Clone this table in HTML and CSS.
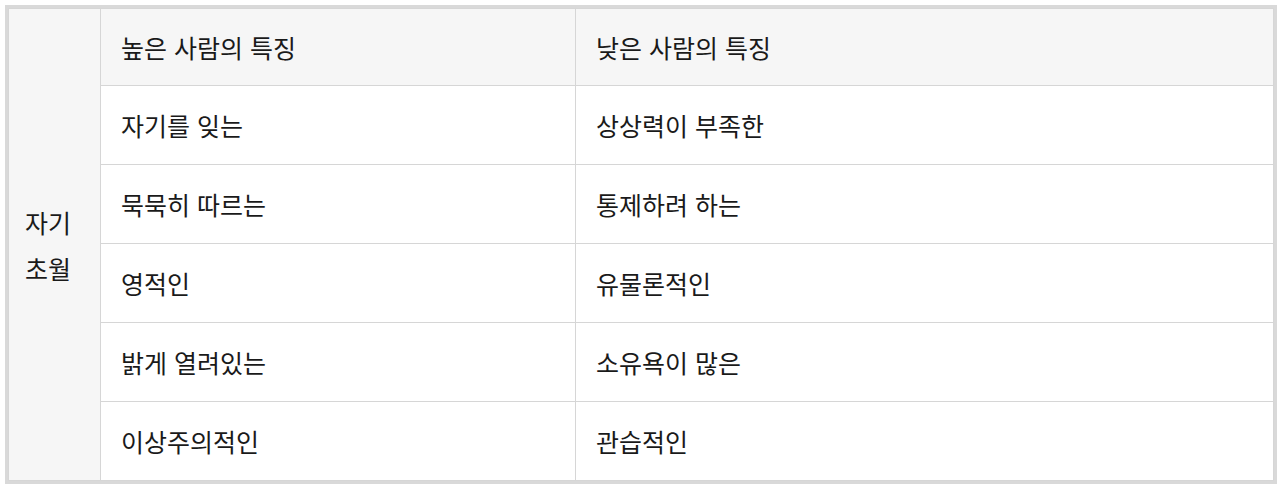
FILE: index.html
```html
<!DOCTYPE html>
<html lang="ko">
<head>
<meta charset="utf-8">
<link rel="stylesheet" href="styles.css">
</head>
<body>
<div class="wrap">
<table class="tbl">
  <colgroup>
    <col class="c1">
    <col class="c2">
    <col class="c3">
  </colgroup>
  <tr>
    <td class="side" rowspan="6">자기 초월</td>
    <td class="head">높은 사람의 특징</td>
    <td class="head">낮은 사람의 특징</td>
  </tr>
  <tr><td>자기를 잊는</td><td>상상력이 부족한</td></tr>
  <tr><td>묵묵히 따르는</td><td>통제하려 하는</td></tr>
  <tr><td>영적인</td><td>유물론적인</td></tr>
  <tr><td>밝게 열려있는</td><td>소유욕이 많은</td></tr>
  <tr><td>이상주의적인</td><td>관습적인</td></tr>
</table>
</div>
</body>
</html>
```

FILE: styles.css
```css
html, body {
  margin: 0;
  padding: 0;
  background: #ffffff;
}
body {
  padding: 5px 3px 0 5px;
  font-family: "Noto Sans CJK KR", "Noto Sans", sans-serif;
  color: #1a1a1a;
}
.wrap {
  width: 1266px;
  border: 3px solid #d9d9d9;
}
.tbl {
  width: 100%;
  border-collapse: collapse;
  table-layout: fixed;
}
.c1 { width: 92px; }
.c2 { width: 475px; }
.tbl td {
  border: 1px solid #d6d6d6;
  height: 79px;
  box-sizing: border-box;
  padding: 0 18px 0 20px;
  font-size: 25px;
  line-height: 46px;
  vertical-align: middle;
  text-align: left;
}
.tbl tr:first-child td.head {
  height: 77px;
}
.tbl td.head {
  background: #f6f6f6;
}
.tbl td.side {
  background: #f6f6f6;
  padding: 0 16px 0 16px;
}
```
